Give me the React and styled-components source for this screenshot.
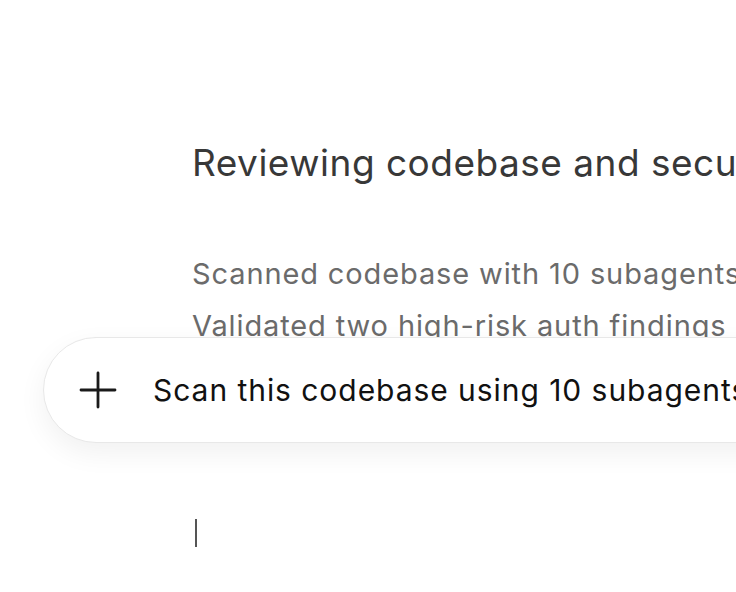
import React from 'react';
import styled, { createGlobalStyle } from 'styled-components';

const GlobalStyle = createGlobalStyle`
  html, body {
    margin: 0;
    padding: 0;
    background: #ffffff;
    overflow: hidden;
  }
  body {
    font-family: Inter, "Noto Sans", "Liberation Sans", sans-serif;
    -webkit-font-smoothing: antialiased;
  }
`;

const Page = styled.div`
  position: relative;
  width: 736px;
  height: 592px;
  overflow: hidden;
  background: #ffffff;
`;

const Thread = styled.div`
  display: flex;
  flex-direction: column;
  padding: 140px 0 0 192px;
  white-space: nowrap;
`;

const Title = styled.h1`
  margin: 0;
  font-size: 37px;
  font-weight: 400;
  line-height: 46px;
  color: #383838;
  letter-spacing: 0.5px;
`;

const Steps = styled.div`
  display: flex;
  flex-direction: column;
  margin-top: 62px;
`;

const Step = styled.div`
  font-size: 29px;
  line-height: 52px;
  color: #6b6b6b;
  letter-spacing: 0.88px;
`;

const Composer = styled.div`
  position: absolute;
  top: 337px;
  left: 43px;
  width: 900px;
  height: 106px;
  box-sizing: border-box;
  display: flex;
  align-items: center;
  gap: 36px;
  padding-left: 35px;
  background: #ffffff;
  border: 1.5px solid #e8e8e8;
  border-radius: 53px;
  box-shadow: 0 10px 28px rgba(0, 0, 0, 0.06);
  white-space: nowrap;
`;

const PlusButton = styled.span`
  display: flex;
  width: 38px;
  height: 38px;
  color: #1a1a1a;
`;

const Prompt = styled.span`
  font-size: 30px;
  color: #111111;
  letter-spacing: 0.95px;
`;

const CursorRow = styled.div`
  padding: 167px 0 0 195px;
`;

const Caret = styled.div`
  width: 2px;
  height: 28px;
  background: #555555;
`;

const PlusIcon = () => (
  <svg viewBox="0 0 38 38" width="38" height="38" fill="none">
    <path d="M19 2v34M2 19h34" stroke="currentColor" strokeWidth="2.8" strokeLinecap="round" />
  </svg>
);

export default function App() {
  return (
    <Page>
      <GlobalStyle />
      <Thread>
        <Title>Reviewing codebase and security findings</Title>
        <Steps>
          <Step>Scanned codebase with 10 subagents in parallel</Step>
          <Step>Validated two high-risk auth findings</Step>
        </Steps>
      </Thread>
      <Composer>
        <PlusButton>
          <PlusIcon />
        </PlusButton>
        <Prompt>Scan this codebase using 10 subagents and find vulnerabilities</Prompt>
      </Composer>
      <CursorRow>
        <Caret />
      </CursorRow>
    </Page>
  );
}
